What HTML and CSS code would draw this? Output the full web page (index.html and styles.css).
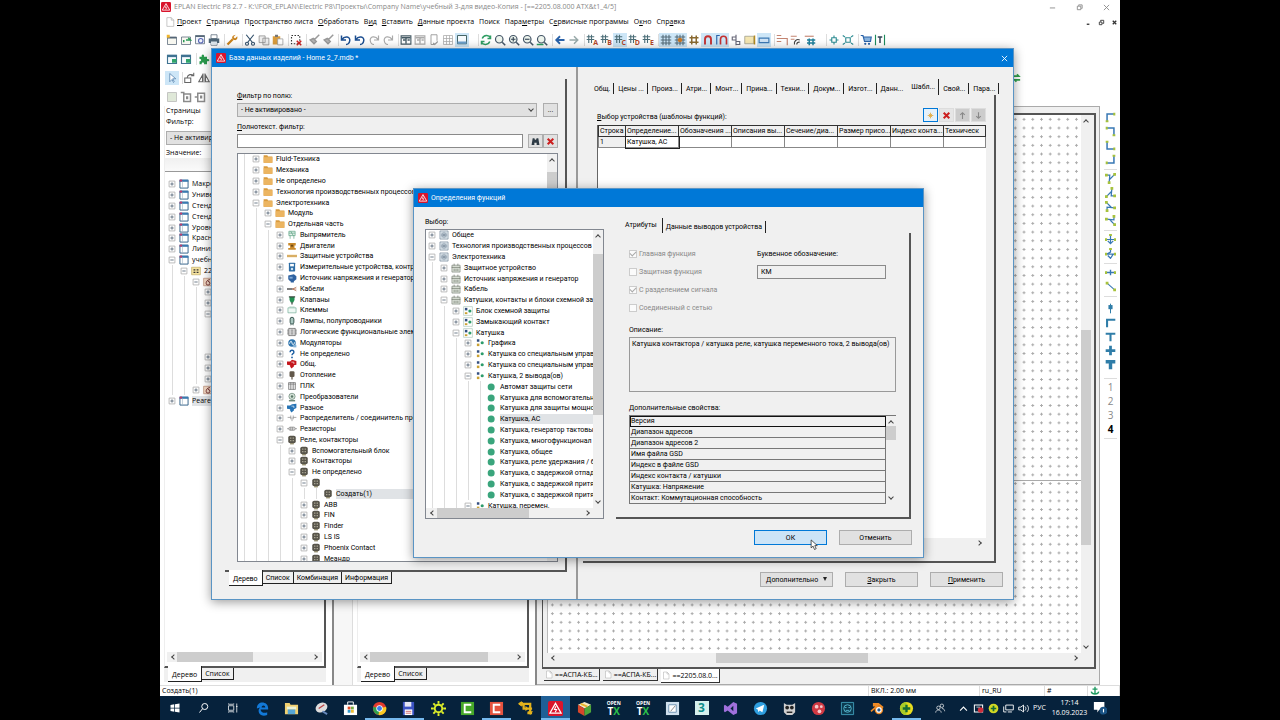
FILE: index.html
```html
<!DOCTYPE html>
<html lang="ru">
<head>
    <meta charset="UTF-8">
    <meta name="viewport" content="width=device-width, initial-scale=1.0">
    <title>EPLAN Electric P8 2.7</title>
    <link rel="stylesheet" href="styles.css">
</head>
<body>
    <!-- Shared icons -->
    <svg class="sprite" aria-hidden="true">
        <symbol id="plus" viewBox="0 0 12 12"><path d="M2.500 2.500h7v7h-7z" fill="#fff" stroke="#b0b0b0"/><path d="M4 6h4M6 4v4" stroke="#567"/></symbol>
        <symbol id="minus" viewBox="0 0 12 12"><path d="M2.500 2.500h7v7h-7z" fill="#fff" stroke="#b0b0b0"/><path d="M4 6h4" stroke="#567"/></symbol>
        <symbol id="eplan" viewBox="0 0 16 16"><rect width="16" height="16" rx="2" fill="#d9142c"/><path d="M8 2.500l6 10.500H2z" fill="none" stroke="#fff" stroke-width="1.300"/><path d="M8.500 5.500L6.800 9h2.400L7.700 12" fill="none" stroke="#fff" stroke-width="1.100"/></symbol>
        <symbol id="folder" viewBox="0 0 16 16"><path d="M1 2h6l1 2h7v10H1z" fill="#d99a3c"/><path d="M1 5h14v9H1z" fill="#ecb561"/></symbol>
        <symbol id="project" viewBox="0 0 16 16"><path d="M1.500 2h13v12.500h-13z" fill="#fff" stroke="#2f5f86" stroke-width="1.500"/><path d="M1 1h14v3.500H1z" fill="#3a7ab0"/><path d="M1 1h4v3H1z" fill="#c23b6b"/><path d="M5.500 4v10" stroke="#9fb4c4"/></symbol>
        <symbol id="plant" viewBox="0 0 16 16"><path d="M1 2h14v12H1z" fill="#f6e3a0" stroke="#b9a35a"/><path d="M4 5h3v2H4zM9 5h3v2H9zM4 9h3v2H4zM9 9h3v2H9z" fill="#333"/></symbol>
        <symbol id="place" viewBox="0 0 16 16"><path d="M1 2h14v12H1z" fill="#f3d8c4" stroke="#b07f66"/><path d="M11 4C6 5 5 8 5 10a3 3 0 1 0 3-3" fill="none" stroke="#733" stroke-width="1.500"/></symbol>
        <symbol id="relay" viewBox="0 0 16 16"><rect x="2" y="1" width="12" height="12" rx="3" fill="#57544a"/><path d="M5 4h2v2H5zM9 4h2v2H9zM5 8h2v2H5zM9 8h2v2H9z" fill="#b3af9c"/><path d="M5 13h6v2H5z" fill="#8b8463"/></symbol>
        <symbol id="rectifier" viewBox="0 0 16 16"><path d="M3 2h10v7H3zM5 9v5M11 9v5M3 5h10M6 2l4 7" fill="#e3f1ea" stroke="#4d9a78"/></symbol>
        <symbol id="motor" viewBox="0 0 16 16"><path d="M2 3h12v4h-2v4h2v3H2v-3h3V7H2z" fill="#c9892a"/><path d="M6 6h4v3H6z" fill="#6d4a14"/></symbol>
        <symbol id="fuse" viewBox="0 0 16 16"><path d="M0 6h16v4H0z" fill="#e8c27d"/><path d="M0 8h16" stroke="#b98530"/></symbol>
        <symbol id="meter" viewBox="0 0 16 16"><rect x="3" y="1" width="10" height="14" rx="1" fill="#2e6da5"/><path d="M5 3h6v4H5z" fill="#fff"/><circle cx="8" cy="11" r="2" fill="#cfe3f4"/></symbol>
        <symbol id="source" viewBox="0 0 16 16"><path d="M2 4l9-2 4 3v5l-4 3v2H6v-2H5l-3-3z" fill="#2f62a0"/><path d="M4 6h5v3H4z" fill="#7fa9d6"/></symbol>
        <symbol id="cable" viewBox="0 0 16 16"><path d="M0 8h9" stroke="#777" stroke-width="3"/><path d="M9 8l6-3M9 8h6M9 8l6 3" stroke="#a0522d"/></symbol>
        <symbol id="valve" viewBox="0 0 16 16"><path d="M4 3h8v5l-2 4H6L4 8z" fill="#239052"/><path d="M3 2h10v2H3zM7 11h2v4H7z" fill="#3b4a40"/></symbol>
        <symbol id="terminal" viewBox="0 0 16 16"><path d="M1.500 4.500h13v8h-13zM5 4V2M8 4V2M11 4V2" fill="#eef8f4" stroke="#6aa890"/></symbol>
        <symbol id="lamp" viewBox="0 0 16 16"><rect x="5" y="2" width="6" height="11" rx="3" fill="#a9c7c0" stroke="#31504a" stroke-width="1.500"/><path d="M6 13v2M10 13v2" stroke="#31504a"/></symbol>
        <symbol id="logic" viewBox="0 0 16 16"><rect x="3" y="2" width="10" height="12" fill="#ddd" stroke="#555"/><path d="M0 5h3M0 8h3M0 11h3M13 5h3M13 8h3M13 11h3M6 5h4M6 8h4M6 11h4" stroke="#555"/></symbol>
        <symbol id="modul" viewBox="0 0 16 16"><circle cx="8" cy="8" r="6" fill="#2e74ad"/><path d="M4 9c2-5 3-5 4-1s3 4 4-1" fill="none" stroke="#fff" stroke-width="1.500"/><path d="M10 11h5v4h-5z" fill="#86b4d8"/></symbol>
        <symbol id="unknown" viewBox="0 0 16 16"><path d="M5 5c0-4 6-4 6 0 0 3-3 2-3 5" fill="none" stroke="#1d5fa2" stroke-width="2.200"/><circle cx="8" cy="13.500" r="1.400" fill="#1d5fa2"/></symbol>
        <symbol id="common" viewBox="0 0 16 16"><path d="M0 4h5l3-3 7 2v6l-4 1v2l-4 3-2-3v-2L0 9z" fill="#c4161c"/><path d="M7 5h4v3" stroke="#fff" fill="none"/></symbol>
        <symbol id="misc" viewBox="0 0 16 16"><path d="M0 4h5l3-2 7-1v7l-4 2v2l-4 3-2-3v-2L0 9z" fill="#2774b5"/><path d="M7 5h4v3" stroke="#fff" fill="none"/></symbol>
        <symbol id="heat" viewBox="0 0 16 16"><rect x="4" y="2" width="8" height="9" rx="2" fill="#62584a"/><path d="M8 11v4" stroke="#62584a" stroke-width="2"/></symbol>
        <symbol id="plc" viewBox="0 0 16 16"><path d="M2.500 2.500h11v11h-11zM6 2v12M10 2v12M2 5h12" fill="#e6e6e6" stroke="#666"/></symbol>
        <symbol id="conv" viewBox="0 0 16 16"><circle cx="8" cy="7" r="5" fill="#d5e3d9" stroke="#5a7767"/><circle cx="8" cy="7" r="2" fill="#5a7767"/><path d="M3 14h10" stroke="#5a7767" stroke-width="2"/></symbol>
        <symbol id="distr" viewBox="0 0 16 16"><path d="M1 7h5M10 7h5M6 4v6M10 4v6M8 7v6" stroke="#777"/></symbol>
        <symbol id="resistor" viewBox="0 0 16 16"><rect x="3" y="5" width="10" height="5" rx="2" fill="#ddd" stroke="#777"/><path d="M0 7.500h3M13 7.500h3M6 5v5M9 5v5" stroke="#777"/></symbol>
        <symbol id="trade" viewBox="0 0 16 16"><path d="M1.500 1.500h13v13h-13z" fill="#e4ecf2" stroke="#6c7f8e"/><path d="M5 4v3M11 4v3M5 9v3M11 9v3M3 8h10M8 3v10" stroke="#3d556a"/></symbol>
        <symbol id="group" viewBox="0 0 16 16"><path d="M1.500 3.500h13v11h-13z" fill="#dfe5dc" stroke="#747a70"/><path d="M1 7h14M5 4V1M11 4V1M5 9v4M8 9v4M11 9v4" stroke="#5b6357"/></symbol>
        <symbol id="func" viewBox="0 0 16 16"><path d="M1 1h14v14H1z" fill="#fff" stroke="#a5c3b5"/><path d="M3 3h4v4H3z" fill="#334f80"/><path d="M3 10h4v3H3z" fill="#caa131"/><circle cx="11" cy="8" r="2.500" fill="#2c9c6b"/></symbol>
        <symbol id="defs" viewBox="0 0 16 16"><path d="M3 2h4v4H3z" fill="#334f80"/><path d="M3 9h4v4H3z" fill="#caa131"/><circle cx="11.500" cy="7.500" r="2.500" fill="#2c9c6b"/></symbol>
        <symbol id="dot" viewBox="0 0 12 12"><circle cx="5" cy="6" r="4.200" fill="#3aa57c"/></symbol>
        <symbol id="page" viewBox="0 0 16 16"><path d="M3 1h7l4 4v10H3z" fill="#fff" stroke="#a9a9a9"/><path d="M10 1v4h4" fill="none" stroke="#a9a9a9"/></symbol>
        <symbol id="sheetblue" viewBox="0 0 16 16"><path d="M2 3h12v11H2z" fill="#f5fafd" stroke="#3f7291" stroke-width="1.500"/><path d="M2 4h12" stroke="#3f7291" stroke-width="3"/><path d="M8 8h6v5H8z" fill="#2fa56a"/></symbol>
        <symbol id="window" viewBox="0 0 16 16"><path d="M1.500 2.500h13v11h-13z" fill="none" stroke="currentColor" stroke-width="1.500"/><path d="M2 5h12M8 5v8M4 8h3M10 8h3" stroke="currentColor" stroke-width="1.800"/></symbol>
        <symbol id="undo" viewBox="0 0 16 16"><path d="M2 2v6h6M2.500 7.500C6 2 14 3 13 9c-.5 3-3 5-5 5" fill="none" stroke="currentColor" stroke-width="2"/></symbol>
        <symbol id="redo" viewBox="0 0 16 16"><path d="M14 2v6H8M13.500 7.500C10 2 2 3 3 9c.5 3 3 5 5 5" fill="none" stroke="currentColor" stroke-width="1.600"/></symbol>
        <symbol id="brush" viewBox="0 0 16 16"><path d="M15 1L8 8M3 8l5 5 3-3-4-4z" stroke="#9a9a9a" stroke-width="2" fill="#b5b5b5"/></symbol>
        <symbol id="lens" viewBox="0 0 16 16"><circle cx="7" cy="7" r="5" fill="#eef5ee" stroke="#456" stroke-width="1.600"/><path d="M11 11l4 4" stroke="#456" stroke-width="2"/></symbol>
        <symbol id="hash" viewBox="0 0 16 16"><path d="M4 1v12M8 1v12M1 4h11M1 8h11" stroke="#4c6e78" stroke-width="1.600"/></symbol>
        <symbol id="grid" viewBox="0 0 16 16"><path d="M4 1v14M8 1v14M12 1v14M1 4h14M1 8h14M1 12h14" stroke="#546a78" stroke-width="1.400"/></symbol>
        <symbol id="corner" viewBox="0 0 16 16"><path d="M3 14V3h11" fill="none" stroke="#3878b4" stroke-width="2.200"/><path d="M12 1h3v4h-3zM1 12h4v3H1z" fill="#a7c23c"/></symbol>
        <symbol id="branch" viewBox="0 0 16 16"><path d="M2 3h5l-1 11M14 2L7 9" fill="none" stroke="#3878b4" stroke-width="1.800"/><path d="M0 1h4v4H0zM12 0h4v4h-4zM4 12h4v4H4z" fill="#a7c23c"/></symbol>
        <symbol id="binoc" viewBox="0 0 16 16"><path d="M3 2h3l1 3h2l1-3h3l2 12h-5v-4H6v4H1z" fill="#2e3b45"/></symbol>
        <symbol id="cross" viewBox="0 0 16 16"><path d="M3 3l10 10M13 3L3 13" stroke="#cc1f1f" stroke-width="3.500"/></symbol>
        <symbol id="chart" viewBox="0 0 16 16"><path d="M1 2h6M1 6h9M1 10h6M9 6h6v9" stroke="#c48572" stroke-width="1.500" fill="none"/></symbol>
    </svg>

    <div class="screen">
        <header class="titlebar">
            <svg class="icon"><use href="#eplan"/></svg>
            <span>EPLAN Electric P8 2.7 - K:\!FOR_EPLAN\Electric P8\Проекты\Company Name\учебный 3-для видео-Копия - [==2205.08.000 ATX&amp;t1_4/5]</span>
            <div class="window-buttons">
                <svg viewBox="0 0 8 8"><path d="M1 4.500h6" stroke="#888"/></svg>
                <svg viewBox="0 0 8 8"><path d="M1.500 2.500h4v4h-4zM3 2V1h4v4H6" fill="none" stroke="#888"/></svg>
                <svg viewBox="0 0 8 8"><path d="M1 1l6 6M7 1L1 7" stroke="#888"/></svg>
            </div>
        </header>

        <nav class="menubar">
            <svg class="icon"><use href="#page"/></svg>
            <a href="#"><u>П</u>роект</a>
            <a href="#"><u>С</u>траница</a>
            <a href="#">П<u>р</u>остранство листа</a>
            <a href="#"><u>О</u>бработать</a>
            <a href="#">В<u>и</u>д</a>
            <a href="#"><u>В</u>ставить</a>
            <a href="#"><u>Д</u>анные проекта</a>
            <a href="#">Поиск</a>
            <a href="#">Пара<u>м</u>етры</a>
            <a href="#">С<u>е</u>рвисные программы</a>
            <a href="#">О<u>к</u>но</a>
            <a href="#">Спр<u>а</u>вка</a>
            <div class="child-buttons">
                <svg viewBox="0 0 8 8"><path d="M2 6h3" stroke="#333" stroke-width="1.500"/></svg>
                <svg viewBox="0 0 8 8"><path d="M1.500 3.500h3v3h-3zM3 3V1.500h3.500V5H5" fill="none" stroke="#333"/></svg>
                <svg viewBox="0 0 8 8"><path d="M2 2l4 4M6 2L2 6" stroke="#333" stroke-width="1.500"/></svg>
            </div>
        </nav>

        <div class="toolbars">
            <div class="toolbar">
                <div class="tools">
                    <svg viewBox="0 0 16 16"><path d="M2 4h12v10H2z" fill="#f7f7f0" stroke="#567"/><path d="M2 5h12" stroke="#567" stroke-width="2"/><path d="M1 1h4v4H1z" fill="#f0b52c"/></svg>
                    <svg viewBox="0 0 16 16"><path d="M2 4h12v10H2z" fill="#f7f7f0" stroke="#567"/><path d="M8 8h6l-3-3M5 8v3" stroke="#2a9a55" stroke-width="2" fill="none"/></svg>
                    <svg viewBox="0 0 16 16"><path d="M2 2h12v11H2z" fill="#f0f3fa" stroke="#567"/><path d="M2 3h12" stroke="#567" stroke-width="2"/><circle cx="9" cy="9" r="3" fill="none" stroke="#5867b4" stroke-width="1.500"/></svg>
                    <svg viewBox="0 0 16 16"><path d="M4 1h8v5H4zM4 10h8v5H4z" fill="#fff" stroke="#567"/><path d="M1 6h14v6H1z" fill="#4d6475"/><path d="M4 10h8v4H4z" fill="#dfe8ee"/></svg>
                </div>
                <div class="tools">
                    <svg viewBox="0 0 16 16"><path d="M2 14l7-7" stroke="#c9821b" stroke-width="3"/><path d="M13 1l-3 3 2 2 3-3c1 3-1 6-4 5S7 4 10 2z" fill="#c9821b"/></svg>
                </div>
                <div class="tools">
                    <svg viewBox="0 0 16 16"><path d="M3 1l8 10M13 1L5 11" stroke="#33506b" stroke-width="1.600"/><circle cx="4" cy="13" r="2" fill="none" stroke="#33506b" stroke-width="1.500"/><circle cx="12" cy="13" r="2" fill="none" stroke="#33506b" stroke-width="1.500"/></svg>
                    <svg viewBox="0 0 16 16"><path d="M1.500 2.500h8v9h-8zM6.500 5.500h8v9h-8z" fill="#eee" stroke="#888"/></svg>
                    <svg viewBox="0 0 16 16"><path d="M1 3h10v11H1z" fill="#d99c3d"/><path d="M4 1h4v3H4z" fill="#777"/><path d="M7.500 6.500h7v8h-7z" fill="#fff" stroke="#999"/></svg>
                </div>
                <div class="tools">
                    <svg viewBox="0 0 16 16"><path d="M2 2h11v11H2z" fill="none" stroke="#333" stroke-width="1.500" stroke-dasharray="2 2"/><path d="M9 9l6 6M15 9l-6 6" stroke="#c22" stroke-width="2"/></svg>
                </div>
                <div class="tools">
                    <svg><use href="#brush"/></svg>
                    <svg><use href="#brush"/></svg>
                </div>
                <div class="tools">
                    <svg class="navy"><use href="#undo"/></svg>
                    <svg class="navy"><use href="#undo"/></svg>
                    <svg class="muted"><use href="#redo"/></svg>
                    <svg class="muted"><use href="#redo"/></svg>
                </div>
                <div class="tools">
                    <svg class="slate"><use href="#window"/></svg>
                    <svg class="muted"><use href="#window"/></svg>
                    <svg viewBox="0 0 16 16"><path d="M4 1h8v8M4 1v13h4" fill="none" stroke="#999" stroke-width="1.200"/><path d="M7 12l2 2 4-4" fill="none" stroke="#999" stroke-width="1.500"/></svg>
                    <svg viewBox="0 0 16 16"><path d="M2 2h12v12H2zM2 6h12M2 10h12M6 2v12M10 2v12" fill="none" stroke="#aaa"/></svg>
                    <svg class="on" viewBox="0 0 16 16"><path d="M2 2h12v11H2z" fill="#f5fafd" stroke="#355" stroke-width="1.200"/><path d="M2 10h12v3H2z" fill="#6ba0cc"/></svg>
                </div>
                <div class="tools far">
                    <svg viewBox="0 0 16 16"><path d="M3 6c2-5 9-5 11-1M14 2v4h-4M13 10c-2 5-9 5-11 1M2 14v-4h4" fill="none" stroke="#2f9d63" stroke-width="2"/></svg>
                    <svg><use href="#lens"/></svg>
                    <svg viewBox="0 0 16 16"><use href="#lens"/><path d="M4 7h6M7 4v6" stroke="#345" stroke-width="1.500"/></svg>
                    <svg viewBox="0 0 16 16"><use href="#lens"/><path d="M4 7h6" stroke="#345" stroke-width="1.500"/></svg>
                    <svg viewBox="0 0 16 16"><use href="#lens"/><path d="M1 14h9" stroke="#2f9d63" stroke-width="2"/></svg>
                </div>
                <div class="tools">
                    <svg viewBox="0 0 16 16"><path d="M14 8H4M8 3L3 8l5 5" fill="none" stroke="#2a62a8" stroke-width="2.400"/></svg>
                    <svg viewBox="0 0 16 16"><path d="M2 8h10M8 3l5 5-5 5" fill="none" stroke="#9aa" stroke-width="2"/></svg>
                </div>
                <div class="tools">
                    <span class="hash-tool"><svg><use href="#hash"/></svg><b>A</b></span>
                    <span class="hash-tool"><svg><use href="#hash"/></svg><b>B</b></span>
                    <span class="hash-tool on"><svg><use href="#hash"/></svg><b>C</b></span>
                    <span class="hash-tool"><svg><use href="#hash"/></svg><b>D</b></span>
                    <span class="hash-tool"><svg><use href="#hash"/></svg><b>E</b></span>
                </div>
                <div class="tools">
                    <svg class="on"><use href="#grid"/></svg>
                    <svg class="on" viewBox="0 0 16 16"><use href="#grid"/><circle cx="8" cy="8" r="3" fill="#c87828"/></svg>
                    <svg viewBox="0 0 16 16"><path d="M5 2v12M11 2v12M2 5h12M2 11h12" stroke="#8a6a30" stroke-width="2"/></svg>
                    <svg class="on" viewBox="0 0 16 16"><path d="M4 14V7a4 4 0 0 1 8 0v7" fill="none" stroke="#c43232" stroke-width="2.500"/></svg>
                    <svg class="on" viewBox="0 0 16 16"><path d="M1 14V2h4" fill="none" stroke="#2a62a8" stroke-width="1.500"/><path d="M6 14V7a4 4 0 0 1 8 0v7" fill="none" stroke="#c43232" stroke-width="2.200"/></svg>
                    <svg viewBox="0 0 16 16"><path d="M8 1v14M3 4h5v4H3zM8 10h5v4H8" fill="none" stroke="#667" stroke-width="1.500"/></svg>
                    <svg viewBox="0 0 16 16"><path d="M1 3h12v10H1z" fill="#f4e6b2" stroke="#998"/><path d="M14 2v12" stroke="#b58c1f" stroke-width="2"/></svg>
                    <svg class="on" viewBox="0 0 16 16"><path d="M1.500 5.500h13v6h-13z" fill="#cfe3f5" stroke="#3c79b4" stroke-width="1.500"/></svg>
                </div>
                <div class="tools">
                    <svg><use href="#chart"/></svg>
                    <svg viewBox="0 0 16 16"><path d="M1 3h8M1 7h5" stroke="#c48572" stroke-width="1.500"/><path d="M6 14a5 5 0 0 1 7-6M9 14a3 3 0 0 1 4-3" fill="none" stroke="#444" stroke-width="1.500"/></svg>
                    <svg viewBox="0 0 16 16"><path d="M1 3h12" stroke="#c48572" stroke-width="1.500"/><path d="M7 6v9M12 6v9M4 8h11M4 12h11" stroke="#22809c" stroke-width="2"/></svg>
                </div>
                <div class="tools far">
                    <svg viewBox="0 0 16 16"><path d="M5 5h6v6H5zM8 2v3M8 11v3M2 8h3M11 8h3" fill="none" stroke="#2f8d93" stroke-width="1.500"/></svg>
                    <svg viewBox="0 0 16 16"><path d="M5 5h6v6H5zM1 2l3 2M15 2l-3 2M1 14l3-2M15 14l-3-2" fill="none" stroke="#2f8d93" stroke-width="1.500"/></svg>
                </div>
                <div class="tools">
                    <svg viewBox="0 0 16 16"><path d="M1 2h3l2 8h8l1-6H5" fill="#8ab4de" stroke="#2a62a8" stroke-width="1.500"/><circle cx="7" cy="13" r="1.500" fill="#2a62a8"/><circle cx="12" cy="13" r="1.500" fill="#2a62a8"/></svg>
                    <svg viewBox="0 0 16 16"><path d="M2 1v14M14 1v14" stroke="#1d8a5b" stroke-width="1.500"/><path d="M5 4h6M8 4v8" stroke="#345" stroke-width="2"/></svg>
                </div>
            </div>
            <div class="toolbar">
                <div class="tools">
                    <svg><use href="#sheetblue"/></svg>
                    <svg><use href="#sheetblue"/></svg>
                </div>
                <div class="tools">
                    <svg viewBox="0 0 16 16"><path d="M2 5h3c-1-4 4-4 3 0h4v3c4-1 4 4 0 3v4H8c1-3-4-3-3 0H2v-4c3 0 3-3 0-3z" fill="#2a9a4d"/></svg>
                </div>
            </div>
            <div class="toolbar">
                <div class="tools">
                    <svg class="on" viewBox="0 0 16 16"><path d="M5 2v11l3-3 2 4 1-1-2-4h4z" fill="#fff" stroke="#4f7fae"/></svg>
                </div>
                <div class="tools">
                    <svg viewBox="0 0 16 16"><path d="M1 8h8v6H1zM4 8c1-5 6-6 9-3M13 1v4H9" fill="none" stroke="#666" stroke-width="1.400"/></svg>
                    <svg viewBox="0 0 16 16"><path d="M8 2v12M6 4L1 13h5zM10 4l5 9h-5z" fill="none" stroke="#666" stroke-width="1.400"/></svg>
                </div>
                <svg class="stray" viewBox="0 0 16 16"><path d="M2 5h9l-3-3M13 11H4l3 3" fill="none" stroke="#2fa04a" stroke-width="2.500"/></svg>
            </div>
            <div class="toolbar">
                <div class="tools">
                    <svg viewBox="0 0 16 16"><path d="M2 2h12v12H2z" fill="#dfe8d8" stroke="#b5b5b5"/></svg>
                    <svg viewBox="0 0 16 16"><path d="M1 2h5M5 4h9v10H5z" fill="none" stroke="#8a8a8a" stroke-width="2"/><path d="M8 7h3v4H8z" fill="#8a8a8a"/></svg>
                    <svg viewBox="0 0 16 16"><path d="M1 8h4M5 3h9v11H5z" fill="none" stroke="#8a8a8a" stroke-width="2"/><path d="M8 6h3v4H8z" fill="#8a8a8a"/></svg>
                </div>
            </div>
        </div>

        <main class="workspace">
            <section class="navigator">
                <div class="nav-body">
                    <h2>Страницы</h2>
                    <label for="page_filter">Фильтр:</label>
                    <select id="page_filter"><option>- Не активировано -</option></select>
                    <label for="page_value">Значение:</label>
                    <input type="text" id="page_value" class="flat">
                    <ul class="tree tree-pages">
                        <li><svg><use href="#plus"/></svg><svg><use href="#project"/></svg>Макросы</li>
                        <li><svg><use href="#plus"/></svg><svg><use href="#project"/></svg>Универ</li>
                        <li><svg><use href="#plus"/></svg><svg><use href="#project"/></svg>Стенд</li>
                        <li><svg><use href="#plus"/></svg><svg><use href="#project"/></svg>Стенд</li>
                        <li><svg><use href="#plus"/></svg><svg><use href="#project"/></svg>Уровн</li>
                        <li><svg><use href="#plus"/></svg><svg><use href="#project"/></svg>Красн</li>
                        <li><svg><use href="#plus"/></svg><svg><use href="#project"/></svg>Линия</li>
                        <li><svg><use href="#minus"/></svg><svg><use href="#project"/></svg>учебн</li>
                        <li class="l1"><svg><use href="#minus"/></svg><svg><use href="#plant"/></svg>2205</li>
                        <li class="l2"><svg><use href="#minus"/></svg><svg><use href="#place"/></svg></li>
                        <li class="l3"><svg><use href="#plus"/></svg></li>
                        <li class="l3"><svg><use href="#plus"/></svg></li>
                        <li class="l3"><svg><use href="#minus"/></svg></li>
                        <li class="l3"></li>
                        <li class="l3"></li>
                        <li class="l3"></li>
                        <li class="l3"><svg><use href="#plus"/></svg></li>
                        <li class="l3"><svg><use href="#plus"/></svg></li>
                        <li class="l3"><svg><use href="#plus"/></svg></li>
                        <li class="l2"><svg><use href="#plus"/></svg><svg><use href="#place"/></svg></li>
                        <li><svg><use href="#plus"/></svg><svg><use href="#project"/></svg><span class="picked">Реаген</span></li>
                    </ul>
                    <div class="hscroll"><i class="arrow left"></i><i class="thumb half"></i><i class="arrow right"></i></div>
                </div>
                <div class="bottom-tabs">
                    <button class="active">Дерево</button>
                    <button>Список</button>
                </div>
            </section>

            <div class="gutter"></div>

            <section class="navigator second">
                <div class="nav-body">
                    <div class="hscroll"><i class="arrow left"></i><i class="thumb most"></i><i class="arrow right"></i></div>
                </div>
                <div class="bottom-tabs">
                    <button class="active">Дерево</button>
                    <button>Список</button>
                </div>
            </section>

            <section class="editor">
                <div class="editor-body">
                    <div class="sheet"></div>
                    <div class="vscroll"><i class="arrow up"></i><i class="thumb"></i><i class="arrow down"></i></div>
                    <div class="hscroll"><i class="arrow left"></i><i class="thumb"></i><i class="arrow right"></i></div>
                </div>
                <div class="doc-tabs">
                    <button><svg><use href="#page"/></svg>==АСПА-КБ...</button>
                    <button><svg><use href="#page"/></svg>==АСПА-КБ...</button>
                    <button class="active"><svg><use href="#page"/></svg>==2205.08.0...</button>
                </div>
            </section>

            <aside class="symbols">
                <div>
                    <svg><use href="#corner"/></svg>
                    <svg class="r90"><use href="#corner"/></svg>
                    <svg class="r270"><use href="#corner"/></svg>
                    <svg class="r180"><use href="#corner"/></svg>
                </div>
                <div>
                    <svg><use href="#branch"/></svg>
                    <svg class="r180"><use href="#branch"/></svg>
                    <svg class="r270"><use href="#branch"/></svg>
                    <svg class="r90"><use href="#branch"/></svg>
                </div>
                <div>
                    <svg viewBox="0 0 16 16"><path d="M8 1v13M1 8h14M4 10l4 4 4-4" fill="none" stroke="#3878b4" stroke-width="1.800"/><path d="M6 0h4v3H6zM0 6h3v4H0zM13 6h3v4h-3z" fill="#a7c23c"/></svg>
                    <svg viewBox="0 0 16 16"><path d="M8 1v5L2 9h12M4 11l4 4 4-6" fill="none" stroke="#3878b4" stroke-width="1.800"/><path d="M6 0h4v3H6zM0 7h3v4H0zM13 7h3v4h-3z" fill="#a7c23c"/></svg>
                </div>
                <div>
                    <svg viewBox="0 0 16 16"><path d="M1 8h14M8 4v8" stroke="#3878b4" stroke-width="2"/><path d="M0 6h3v4H0zM13 6h3v4h-3z" fill="#a7c23c"/></svg>
                    <svg viewBox="0 0 16 16"><path d="M3 3l11 10" stroke="#3878b4" stroke-width="1.500"/><path d="M1 1h4v4H1zM12 11h4v4h-4z" fill="#a7c23c"/></svg>
                </div>
                <div>
                    <svg viewBox="0 0 16 16"><path d="M8 1v14" stroke="#2f7da8" stroke-width="1.500"/><path d="M5 3h6v6H5z" fill="#2f7da8"/></svg>
                    <svg viewBox="0 0 16 16"><path d="M3 15V4h12" fill="none" stroke="#2f7da8" stroke-width="3"/></svg>
                    <svg viewBox="0 0 16 16"><path d="M1 4h14M8 4v11" stroke="#2f7da8" stroke-width="3"/></svg>
                    <svg viewBox="0 0 16 16"><path d="M1 8h14M8 1v14" stroke="#2f7da8" stroke-width="4"/></svg>
                    <svg viewBox="0 0 16 16"><path d="M1 4h14M8 4v11" stroke="#2f7da8" stroke-width="5"/></svg>
                </div>
                <ol>
                    <li>1</li>
                    <li>2</li>
                    <li>3</li>
                    <li class="current">4</li>
                </ol>
            </aside>
        </main>

        <footer class="statusbar">
            <span>Создать(1)</span>
            <span class="snap">ВКЛ.: 2.00 мм</span>
            <span class="locale">ru_RU</span>
            <span class="mark">#</span>
            <span class="anchor"><svg class="icon" viewBox="0 0 16 16"><path d="M8 1v13M4 5h8M2 9c1 5 11 5 12 0" fill="none" stroke="#1f9a62" stroke-width="2.200"/></svg></span>
        </footer>

        <footer class="taskbar">
            <div class="start">
                <svg viewBox="0 0 16 16"><path d="M2 4l5-1v4.500H2zM8 3l6-1v5.500H8zM2 8.500h5V13l-5-1zM8 8.500h6V14l-6-1z" fill="#fff"/></svg>
                <svg viewBox="0 0 16 16"><circle cx="9" cy="6" r="4" fill="none" stroke="#fff" stroke-width="1.300"/><path d="M6 9l-4 5" stroke="#fff" stroke-width="1.300"/></svg>
                <svg viewBox="0 0 16 16"><path d="M2 5h7v6H2zM2 2v1h7V2M2 14v-1h7v1M13 2v12M12 6h2" fill="none" stroke="#fff"/></svg>
            </div>
            <div class="apps">
                <span><svg viewBox="0 0 16 16"><path d="M2 8c0-9 13-8 12 1H6c0 4 5 4 7 3v3C7 17 3 14 4 9c1-2 2-3 4-3" fill="#1279d8"/><path d="M7 7h4c0-3-4-3-4 0z" fill="#06223f"/></svg></span>
                <span><svg viewBox="0 0 16 16"><path d="M1 2h5l1 2h8v10H1z" fill="#f0d070"/><path d="M3 6h10v3H3z" fill="#e8f2d8"/><path d="M4 9h8v5H4z" fill="#56a5d4"/></svg></span>
                <span><svg viewBox="0 0 16 16"><ellipse cx="8" cy="7" rx="6.500" ry="5" fill="#ddd" transform="rotate(-25 8 7)"/><path d="M5 8l6-4" stroke="#b44" stroke-width="1.500"/><path d="M9 11l5 3" stroke="#68b" stroke-width="2"/></svg></span>
                <span><svg viewBox="0 0 16 16"><path d="M5 4V1h6v3" fill="none" stroke="#fff"/><path d="M1 4h14v11H1z" fill="#fff"/><path d="M5 6h3v3H5z" fill="#e34c26"/><path d="M8.500 6h3v3h-3z" fill="#7a4"/><path d="M5 9.500h3v3H5z" fill="#39c"/><path d="M8.500 9.500h3v3h-3z" fill="#eb3"/></svg></span>
                <span class="open"><svg viewBox="0 0 16 16"><circle cx="8" cy="8" r="7" fill="#e33b2e"/><path d="M8 8L1.500 6A7 7 0 0 0 7 15z" fill="#2fa24f"/><path d="M8 8l7-2a7 7 0 0 1-8 9z" fill="#f9c923"/><circle cx="8" cy="8" r="3.400" fill="#fff"/><circle cx="8" cy="8" r="2.600" fill="#3b7ded"/></svg></span>
                <span class="open"><svg viewBox="0 0 16 16"><path d="M2 1h12v14H2z" fill="#3b53c4"/><path d="M4 1h7v5H4z" fill="#e4e6f4"/><path d="M4 9h8v6H4z" fill="#fff"/><path d="M5 11h6M5 13h6" stroke="#c66"/></svg></span>
                <span><svg viewBox="0 0 16 16"><circle cx="8" cy="8" r="4" fill="none" stroke="#dff02a" stroke-width="2"/><path d="M8 0v3M8 13v3M0 8h3M13 8h3M2.500 2.500l2 2M11.500 11.500l2 2M13.500 2.500l-2 2M4.500 11.500l-2 2" stroke="#dff02a" stroke-width="2"/></svg></span>
                <span><svg viewBox="0 0 16 16"><path d="M1 1h14v14H1z" fill="#46a829"/><path d="M11 5V4H5v8h6v-1" fill="none" stroke="#fff" stroke-width="2"/></svg></span>
                <span class="open"><svg viewBox="0 0 16 16"><path d="M1 1h14v14H1z" fill="#e5533f"/><path d="M11 5V4H5v8h6v-1" fill="none" stroke="#fff" stroke-width="2"/></svg></span>
                <span><svg viewBox="0 0 16 16"><path d="M1 3h12v9M6 3v5h6M4 1v4M10 13h5M13 8h2" fill="none" stroke="#e3b21c" stroke-width="2.400"/><path d="M4 0v6L0 3zM8 5l3 3-3 3zM10 11l3 4 3-4z" fill="#e3b21c"/></svg></span>
                <span class="focused"><svg><use href="#eplan"/></svg></span>
                <span><svg viewBox="0 0 16 16"><path d="M8 1l7 3-7 4-7-4z" fill="#f4e9c4"/><path d="M1 4l7 4v8l-7-4z" fill="#d8472b"/><path d="M15 4L8 8v8l7-4z" fill="#4ea63a"/><path d="M4 3l7 3" stroke="#e7b42a" stroke-width="2"/></svg></span>
                <span class="opentx"><small>OPEN</small>T<em>X</em></span>
                <span class="opentx"><small>OPEN</small>T<em>X</em></span>
                <span><svg viewBox="0 0 16 16"><path d="M1 1h14v14H1z" fill="#cfe0ee"/><path d="M4 4h8v8H4z" fill="#fff" stroke="#6d93b4"/><path d="M6 11l5-6" stroke="#888"/></svg></span>
                <span class="max"><b>3</b></span>
                <span><svg viewBox="0 0 16 16"><path d="M11 1l4 2v10l-4 2-6-5-3 2-1-1V5l1-1 3 2zM11 5L8 8l3 3z" fill="#a070dc" fill-rule="evenodd"/></svg></span>
                <span><svg viewBox="0 0 16 16"><circle cx="8" cy="8" r="7" fill="#2f9fe0"/><path d="M3 8l9-4-2 8-3-2-1 2-1-3z" fill="#fff"/></svg></span>
                <span><svg viewBox="0 0 16 16"><path d="M2 2l3 2h6l3-2v10l-3 3H5l-3-3z" fill="#cfcfcf"/><circle cx="5.500" cy="7" r="2" fill="#222"/><circle cx="10.500" cy="7" r="2" fill="#222"/><path d="M5 12h6" stroke="#222" stroke-width="1.500"/></svg></span>
                <span><svg viewBox="0 0 16 16"><circle cx="8" cy="8" r="7" fill="#cf3943"/><circle cx="6" cy="6" r="2" fill="#f4c9cc"/><circle cx="11" cy="6" r="1.500" fill="#f4c9cc"/><circle cx="9" cy="11" r="2" fill="#f4c9cc"/></svg></span>
                <span><svg viewBox="0 0 16 16"><path d="M1.500 1.500h13v13h-13z" fill="#0c3a50" stroke="#3e9ab5"/><circle cx="8" cy="8" r="4" fill="none" stroke="#56b6cf"/><path d="M5 7h2M9 7h2M6 10h4" stroke="#56b6cf"/></svg></span>
                <span><svg viewBox="0 0 16 16"><path d="M1 11l7-6H4V3h5l5 4" fill="none" stroke="#ee8a25" stroke-width="1.800"/><circle cx="9.500" cy="9.500" r="4.500" fill="#ee8a25"/><circle cx="9.500" cy="9.500" r="3" fill="#fff"/><circle cx="9.500" cy="9.500" r="1.700" fill="#245b94"/></svg></span>
                <span class="open"><svg viewBox="0 0 16 16"><circle cx="8" cy="8" r="7" fill="#e7dc1f"/><path d="M8 1a7 7 0 0 0 0 14z" fill="#a9cb27"/><path d="M4 8h8M8 4v8" stroke="#176b33" stroke-width="2.500"/></svg></span>
            </div>
            <div class="tray">
                <svg viewBox="0 0 16 16"><circle cx="10" cy="4" r="2.500" fill="none" stroke="#fff"/><circle cx="5" cy="7" r="2.500" fill="none" stroke="#fff"/><path d="M1 14c0-5 8-5 8 0M10 8c3 0 4 2 4 4" fill="none" stroke="#fff"/></svg>
                <svg viewBox="0 0 16 16"><path d="M3 11l5-5 5 5" fill="none" stroke="#fff" stroke-width="1.600"/></svg>
                <svg viewBox="0 0 16 16"><path d="M2 3h12v10H2z" fill="none" stroke="#fff" stroke-width="1.500"/><circle cx="11" cy="10" r="4" fill="#cf2d3a"/><path d="M5 6h5" stroke="#fff"/></svg>
                <svg viewBox="0 0 16 16"><circle cx="8" cy="8" r="7" fill="#d3d824"/><path d="M4 8h8M8 4v8" stroke="#176b33" stroke-width="2.500"/></svg>
                <svg viewBox="0 0 16 16"><path d="M4 3h11v7H4zM7 13h6M1 5v8h4" fill="none" stroke="#fff" stroke-width="1.300"/></svg>
                <svg viewBox="0 0 16 16"><path d="M1 6h3l4-3v10L4 10H1zM10 5c2 2 2 4 0 6M13 3c3 3 3 7 0 10" fill="none" stroke="#fff" stroke-width="1.300"/></svg>
                <span>РУС</span>
                <time>17:14<br>16.09.2023</time>
                <svg class="notice" viewBox="0 0 16 16"><path d="M1 1h12v9H7l-2 3v-3H1z" fill="#fff"/><circle cx="12" cy="11" r="4.500" fill="#1a5486"/><path d="M12 9v4" stroke="#fff" stroke-width="1.300"/></svg>
            </div>
        </footer>

        <!-- Parts database window -->
        <section class="dialog parts">
            <header class="dialog-title">
                <svg class="icon"><use href="#eplan"/></svg>
                <h1>База данных изделий - Home 2_7.mdb *</h1>
                <button class="close" aria-label="Закрыть окно"><svg viewBox="0 0 8 8"><path d="M1 1l6 6M7 1L1 7" stroke="#fff"/></svg></button>
            </header>
            <div class="parts-body">
                <div class="parts-left">
                    <div class="tab-panel">
                        <label for="field_filter"><u>Ф</u>ильтр по полю:</label>
                        <div class="field-row">
                            <select id="field_filter"><option>- Не активировано -</option></select>
                            <i class="arrow down"></i>
                            <button class="more">...</button>
                        </div>
                        <label for="text_filter"><u>П</u>олнотекст. фильтр:</label>
                        <div class="field-row search-row">
                            <input type="text" id="text_filter">
                            <button aria-label="Найти"><svg><use href="#binoc"/></svg></button>
                            <button aria-label="Сбросить"><svg><use href="#cross"/></svg></button>
                        </div>
                        <div class="tree-box">
                            <ul class="tree tree-parts">
                                <li class="l1"><svg><use href="#plus"/></svg><svg><use href="#folder"/></svg>Fluid-Техника</li>
                                <li class="l1"><svg><use href="#plus"/></svg><svg><use href="#folder"/></svg>Механика</li>
                                <li class="l1"><svg><use href="#plus"/></svg><svg><use href="#folder"/></svg>Не определено</li>
                                <li class="l1"><svg><use href="#plus"/></svg><svg><use href="#folder"/></svg>Технология производственных процессов</li>
                                <li class="l1"><svg><use href="#minus"/></svg><svg><use href="#folder"/></svg>Электротехника</li>
                                <li class="l2"><svg><use href="#plus"/></svg><svg><use href="#folder"/></svg>Модуль</li>
                                <li class="l2"><svg><use href="#minus"/></svg><svg><use href="#folder"/></svg>Отдельная часть</li>
                                <li class="l3"><svg><use href="#plus"/></svg><svg><use href="#rectifier"/></svg>Выпрямитель</li>
                                <li class="l3"><svg><use href="#plus"/></svg><svg><use href="#motor"/></svg>Двигатели</li>
                                <li class="l3"><svg><use href="#plus"/></svg><svg><use href="#fuse"/></svg>Защитные устройства</li>
                                <li class="l3"><svg><use href="#plus"/></svg><svg><use href="#meter"/></svg>Измерительные устройства, контр</li>
                                <li class="l3"><svg><use href="#plus"/></svg><svg><use href="#source"/></svg>Источник напряжения и генератор</li>
                                <li class="l3"><svg><use href="#plus"/></svg><svg><use href="#cable"/></svg>Кабели</li>
                                <li class="l3"><svg><use href="#plus"/></svg><svg><use href="#valve"/></svg>Клапаны</li>
                                <li class="l3"><svg><use href="#plus"/></svg><svg><use href="#terminal"/></svg>Клеммы</li>
                                <li class="l3"><svg><use href="#plus"/></svg><svg><use href="#lamp"/></svg>Лампы, полупроводники</li>
                                <li class="l3"><svg><use href="#plus"/></svg><svg><use href="#logic"/></svg>Логические функциональные элементы</li>
                                <li class="l3"><svg><use href="#plus"/></svg><svg><use href="#modul"/></svg>Модуляторы</li>
                                <li class="l3"><svg><use href="#plus"/></svg><svg><use href="#unknown"/></svg>Не определено</li>
                                <li class="l3"><svg><use href="#plus"/></svg><svg><use href="#common"/></svg>Общ.</li>
                                <li class="l3"><svg><use href="#plus"/></svg><svg><use href="#heat"/></svg>Отопление</li>
                                <li class="l3"><svg><use href="#plus"/></svg><svg><use href="#plc"/></svg>ПЛК</li>
                                <li class="l3"><svg><use href="#plus"/></svg><svg><use href="#conv"/></svg>Преобразователи</li>
                                <li class="l3"><svg><use href="#plus"/></svg><svg><use href="#misc"/></svg>Разное</li>
                                <li class="l3"><svg><use href="#plus"/></svg><svg><use href="#distr"/></svg>Распределитель / соединитель про</li>
                                <li class="l3"><svg><use href="#plus"/></svg><svg><use href="#resistor"/></svg>Резисторы</li>
                                <li class="l3"><svg><use href="#minus"/></svg><svg><use href="#relay"/></svg>Реле, контакторы</li>
                                <li class="l4"><svg><use href="#plus"/></svg><svg><use href="#relay"/></svg>Вспомогательный блок</li>
                                <li class="l4"><svg><use href="#plus"/></svg><svg><use href="#relay"/></svg>Контакторы</li>
                                <li class="l4"><svg><use href="#minus"/></svg><svg><use href="#relay"/></svg>Не определено</li>
                                <li class="l5"><svg><use href="#minus"/></svg><svg><use href="#relay"/></svg></li>
                                <li class="l6 leaf"><svg><use href="#relay"/></svg><span class="picked">Создать(1)</span></li>
                                <li class="l5"><svg><use href="#plus"/></svg><svg><use href="#relay"/></svg>ABB</li>
                                <li class="l5"><svg><use href="#plus"/></svg><svg><use href="#relay"/></svg>FIN</li>
                                <li class="l5"><svg><use href="#plus"/></svg><svg><use href="#relay"/></svg>Finder</li>
                                <li class="l5"><svg><use href="#plus"/></svg><svg><use href="#relay"/></svg>LS IS</li>
                                <li class="l5"><svg><use href="#plus"/></svg><svg><use href="#relay"/></svg>Phoenix Contact</li>
                                <li class="l5"><svg><use href="#plus"/></svg><svg><use href="#relay"/></svg>Меандр</li>
                            </ul>
                            <div class="vscroll"><i class="arrow up"></i><i class="thumb"></i><i class="arrow down"></i></div>
                        </div>
                    </div>
                    <div class="bottom-tabs">
                        <button class="active">Дерево</button>
                        <button>Список</button>
                        <button>Комбинация</button>
                        <button>Информация</button>
                    </div>
                </div>

                <div class="parts-right">
                    <div class="top-tabs">
                        <button>Общ.</button>
                        <button>Цены ...</button>
                        <button>Произ...</button>
                        <button>Атри...</button>
                        <button>Монт...</button>
                        <button>Прина...</button>
                        <button>Техни...</button>
                        <button>Докум...</button>
                        <button>Изгот...</button>
                        <button class="before">Данн...</button>
                        <button class="active">Шабл...</button>
                        <button>Свой...</button>
                        <button>Пара...</button>
                    </div>
                    <div class="tab-panel">
                        <div class="device-head">
                            <span><u>В</u>ыбор устройства (шаблоны функций):</span>
                            <button class="hot" aria-label="Создать"><svg viewBox="0 0 16 16"><path d="M8 3v10M3 8h10M5 5l6 6M11 5l-6 6" stroke="#e3a93c" stroke-width="1.500"/></svg></button>
                            <button aria-label="Удалить"><svg><use href="#cross"/></svg></button>
                            <button class="dim" aria-label="Вверх"><svg viewBox="0 0 16 16"><path d="M8 14V3M4 7l4-4 4 4" fill="none" stroke="#888" stroke-width="2"/></svg></button>
                            <button class="dim" aria-label="Вниз"><svg viewBox="0 0 16 16"><path d="M8 2v11M4 9l4 4 4-4" fill="none" stroke="#888" stroke-width="2"/></svg></button>
                        </div>
                        <div class="device-grid">
                            <table>
                                <colgroup><col class="col-num"><col><col><col><col><col><col><col class="col-last"></colgroup>
                                <thead>
                                    <tr><th>Строка</th><th>Определение...</th><th>Обозначения ...</th><th>Описания вы...</th><th>Сечение/диа...</th><th>Размер присо...</th><th>Индекс конта...</th><th>Техническ</th></tr>
                                </thead>
                                <tbody>
                                    <tr><td class="num">1</td><td class="cell-active">Катушка, АС</td><td></td><td></td><td></td><td></td><td></td><td></td></tr>
                                </tbody>
                            </table>
                        </div>
                        <div class="hscroll"><i class="arrow left"></i><i class="arrow right"></i></div>
                    </div>
                    <div class="actions">
                        <button><u>Д</u>ополнительно <i class="caret"></i></button>
                        <button><u>З</u>акрыть</button>
                        <button><u>П</u>рименить</button>
                    </div>
                </div>
            </div>
        </section>

        <!-- Function definitions window -->
        <section class="dialog functions">
            <header class="dialog-title">
                <svg class="icon"><use href="#eplan"/></svg>
                <h1>Определения функций</h1>
            </header>
            <div class="functions-body">
                <div class="picker">
                    <span class="caption">Выбор:</span>
                    <div class="tree-box">
                        <ul class="tree tree-functions">
                            <li><svg><use href="#plus"/></svg><svg><use href="#trade"/></svg>Общее</li>
                            <li><svg><use href="#plus"/></svg><svg><use href="#trade"/></svg>Технология производственных процессов</li>
                            <li><svg><use href="#minus"/></svg><svg><use href="#trade"/></svg>Электротехника</li>
                            <li class="l1"><svg><use href="#plus"/></svg><svg><use href="#group"/></svg>Защитное устройство</li>
                            <li class="l1"><svg><use href="#plus"/></svg><svg><use href="#group"/></svg>Источник напряжения и генератор</li>
                            <li class="l1"><svg><use href="#plus"/></svg><svg><use href="#group"/></svg>Кабель</li>
                            <li class="l1"><svg><use href="#minus"/></svg><svg><use href="#group"/></svg>Катушки, контакты и блоки схемной за</li>
                            <li class="l2"><svg><use href="#plus"/></svg><svg><use href="#func"/></svg>Блок схемной защиты</li>
                            <li class="l2"><svg><use href="#plus"/></svg><svg><use href="#func"/></svg>Замыкающий контакт</li>
                            <li class="l2"><svg><use href="#minus"/></svg><svg><use href="#func"/></svg>Катушка</li>
                            <li class="l3"><svg><use href="#plus"/></svg><svg><use href="#defs"/></svg>Графика</li>
                            <li class="l3"><svg><use href="#plus"/></svg><svg><use href="#defs"/></svg>Катушка со специальным управ</li>
                            <li class="l3"><svg><use href="#plus"/></svg><svg><use href="#defs"/></svg>Катушка со специальным управ</li>
                            <li class="l3"><svg><use href="#minus"/></svg><svg><use href="#defs"/></svg>Катушка, 2 вывода(ов)</li>
                            <li class="l5 leaf"><svg><use href="#dot"/></svg>Автомат защиты сети</li>
                            <li class="l5 leaf"><svg><use href="#dot"/></svg>Катушка для вспомогательн</li>
                            <li class="l5 leaf"><svg><use href="#dot"/></svg>Катушка для защиты мощно</li>
                            <li class="l5 leaf"><svg><use href="#dot"/></svg><span class="picked">Катушка, АС</span></li>
                            <li class="l5 leaf"><svg><use href="#dot"/></svg>Катушка, генератор тактовы</li>
                            <li class="l5 leaf"><svg><use href="#dot"/></svg>Катушка, многофункционал</li>
                            <li class="l5 leaf"><svg><use href="#dot"/></svg>Катушка, общее</li>
                            <li class="l5 leaf"><svg><use href="#dot"/></svg>Катушка, реле удержания / б</li>
                            <li class="l5 leaf"><svg><use href="#dot"/></svg>Катушка, с задержкой отпад</li>
                            <li class="l5 leaf"><svg><use href="#dot"/></svg>Катушка, с задержкой притя</li>
                            <li class="l5 leaf"><svg><use href="#dot"/></svg>Катушка, с задержкой притя</li>
                            <li class="l3"><svg><use href="#minus"/></svg><svg><use href="#defs"/></svg>Катушка, перемен.</li>
                        </ul>
                        <div class="vscroll"><i class="arrow up"></i><i class="thumb"></i><i class="arrow down"></i></div>
                        <div class="hscroll"><i class="arrow left"></i><i class="thumb"></i><i class="arrow right"></i></div>
                    </div>
                </div>

                <div class="details">
                    <div class="top-tabs">
                        <button class="active">Атрибуты</button>
                        <button>Данные выводов устройства</button>
                    </div>
                    <div class="tab-panel">
                        <div class="attributes">
                            <div class="checks">
                                <label><input type="checkbox" checked disabled>Главная функция</label>
                                <label><input type="checkbox" disabled>Защитная функция</label>
                                <label><input type="checkbox" checked disabled>С разделением сигнала</label>
                                <label><input type="checkbox" disabled>Соединенный с сетью</label>
                            </div>
                            <div class="letter">
                                <label for="letter_code">Буквенное обозначение:</label>
                                <input type="text" id="letter_code" value="КМ" readonly>
                            </div>
                        </div>
                        <label for="description">Описание:</label>
                        <textarea id="description" readonly>Катушка контактора / катушка реле, катушка переменного тока, 2 вывода(ов)</textarea>
                        <span class="caption">Дополнительные свойства:</span>
                        <div class="properties">
                            <ul>
                                <li class="current">Версия</li>
                                <li>Диапазон адресов</li>
                                <li>Диапазон адресов 2</li>
                                <li>Имя файла GSD</li>
                                <li>Индекс в файле GSD</li>
                                <li>Индекс контакта / катушки</li>
                                <li>Катушка: Напряжение</li>
                                <li>Контакт: Коммутационная способность</li>
                            </ul>
                            <div class="vscroll"><i class="arrow up"></i><i class="thumb"></i><i class="arrow down"></i></div>
                        </div>
                    </div>
                </div>
            </div>
            <div class="actions">
                <button class="default">ОК</button>
                <button>Отменить</button>
            </div>
            <svg class="cursor" viewBox="0 0 16 20"><path d="M2 1v14l3.500-3 2.500 6 3-1.500-2.500-5.500H13z" fill="#fff" stroke="#222" stroke-width="1.300"/></svg>
        </section>
    </div>
</body>
</html>
```
FILE: styles.css
```css
* {
    box-sizing: border-box;
}
body {
    margin: 0;
    background-color: #000;
    font-family: 'Open Sans', 'Noto Sans', sans-serif;
    font-size: 7px;
    line-height: 10px;
    color: #000;
}
button, input, select, textarea {
    font: inherit;
    color: inherit;
    margin: 0;
    border-radius: 0;
}
h1, h2 {
    margin: 0;
    font-size: 7px;
    font-weight: normal;
}
ul, ol {
    margin: 0;
    padding: 0;
    list-style: none;
}
svg {
    display: block;
    flex: none;
}
.sprite {
    position: absolute;
    width: 0;
    height: 0;
}
.icon {
    width: 10px;
    height: 10px;
}
.screen {
    position: relative;
    display: flex;
    flex-direction: column;
    width: 75%;
    height: 100vh;
    margin: 0 auto;
    background-color: #fff;
    overflow: hidden;
}

/* Title and menu */
.titlebar {
    display: flex;
    align-items: center;
    gap: 3px;
    height: 14px;
    padding: 0 10px 0 1px;
    color: #888;
    white-space: nowrap;
}
.window-buttons {
    display: flex;
    gap: 20px;
    margin-left: auto;
}
.window-buttons svg, .child-buttons svg {
    width: 7px;
    height: 7px;
}
.menubar {
    display: flex;
    align-items: center;
    gap: 5px;
    height: 16px;
    padding: 0 2px 0 5px;
}
.menubar .icon {
    margin-right: -3px;
}
.menubar a {
    color: #000;
    text-decoration: none;
    white-space: nowrap;
}
.child-buttons {
    display: flex;
    gap: 6px;
    margin-left: auto;
}

/* Toolbars */
.toolbar {
    position: relative;
    display: flex;
    align-items: center;
    height: 19px;
    padding-left: 5px;
}
.tools {
    display: flex;
    margin-right: 4px;
}
.tools + .tools {
    box-shadow: -2px 0 0 -1px #ddd;
}
.tools.far {
    margin-left: 6px;
}
.tools > svg, .hash-tool {
    width: 14px;
    height: 14px;
    padding: 1px;
}
.tools .on {
    background-color: #cde6f7;
}
.navy {
    color: #1d4f91;
}
.muted {
    color: #aaa;
}
.slate {
    color: #455a64;
}
.hash-tool {
    position: relative;
}
.hash-tool svg {
    width: 11px;
    height: 11px;
}
.hash-tool b {
    position: absolute;
    right: 1px;
    bottom: 0;
    font-size: 7px;
    line-height: 8px;
    color: #b5482a;
}
.stray {
    position: absolute;
    right: 98px;
    width: 10px;
    height: 10px;
}

/* Scrollbars */
.vscroll, .hscroll {
    position: relative;
    display: flex;
    justify-content: space-between;
    align-items: center;
    background-color: #f0f0f0;
}
.vscroll {
    flex-direction: column;
    width: 10px;
    padding: 5px 0;
}
.hscroll {
    height: 10px;
    padding: 0 5px;
}
.arrow {
    width: 4px;
    height: 4px;
    border: solid #444;
    border-width: 1px 1px 0 0;
}
.arrow.up {
    transform: rotate(-45deg);
}
.arrow.down {
    transform: rotate(135deg);
}
.arrow.left {
    transform: rotate(-135deg);
}
.arrow.right {
    transform: rotate(45deg);
}
.thumb {
    position: absolute;
    background-color: #cdcdcd;
}
.vscroll .thumb {
    left: 0;
    right: 0;
}
.hscroll .thumb {
    top: 0;
    bottom: 0;
}

/* Docked navigators */
.workspace {
    display: flex;
    flex: 1;
    min-height: 0;
    overflow: hidden;
}
.navigator {
    display: flex;
    flex-direction: column;
    width: 174px;
    padding: 0 6px 3px 4px;
    border-right: 2px solid #888;
}
.nav-body {
    display: flex;
    flex-direction: column;
    flex: 1;
    min-height: 0;
    border: 1px solid #eee;
    border-width: 0 2px 2px 1px;
    border-right-color: #555;
    border-bottom-color: #555;
}
.nav-body h2, .nav-body label {
    height: 10px;
    margin-left: 1px;
}
.nav-body label {
    margin-top: 1px;
}
.nav-body select {
    height: 14px;
    margin: 4px 0 2px 1px;
}
.nav-body select + label {
    margin-top: 1px;
}
.flat {
    height: 14px;
    border: 0;
    border-bottom: 1px solid #999;
    background: linear-gradient(#f0f0f0, #fafafa);
}
.nav-body .hscroll {
    margin: auto 2px 4px;
}
.half {
    left: 10px;
    width: 76px;
}
.most {
    left: 10px;
    width: 118px;
}
.bottom-tabs {
    display: flex;
    height: 14px;
    padding-left: 4px;
    background-color: #f0f0f0;
}
.bottom-tabs button {
    height: 12px;
    padding: 0 3px;
    border: solid #222;
    border-width: 0 1px 1px 0;
    background-color: #f0f0f0;
    line-height: 10px;
}
.bottom-tabs .active {
    height: 16px;
    margin-top: -2px;
    padding: 3px 4px 0;
    background-color: #fff;
}
.gutter {
    width: 19px;
    border-right: 1px solid #ddd;
    background-color: #f7f7f7;
}
.navigator.second {
    width: 184px;
}

/* Schematic editor */
.editor {
    display: flex;
    flex-direction: column;
    flex: 1;
    min-width: 0;
    padding: 6px 3px 1px 5px;
    border: 1px solid #aaa;
    border-left: 0;
    background-color: #f0f0f0;
}
.editor-body {
    display: grid;
    grid-template: 1fr 10px / 1fr 10px;
    flex: 1;
    padding: 0 3px 4px 4px;
    border: solid #555;
    border-width: 2px 2px 2px 1px;
}
.editor-body .hscroll {
    grid-column: 1 / -1;
    padding-right: 14px;
}
.editor-body .vscroll .thumb {
    top: 40%;
    height: 40%;
}
.editor-body .hscroll .thumb {
    left: 31%;
    width: 28%;
}
.sheet {
    border-left: 1px solid #bbb;
    background: linear-gradient(#aaa, #aaa) 0 68% / 100% 1px no-repeat, radial-gradient(circle, #aaa 0 1px, transparent 1px) 0 0 / calc(100% / 61) calc(100% / 62) #fff;
}
.doc-tabs {
    display: flex;
    gap: 3px;
    height: 14px;
    padding-left: 2px;
}
.doc-tabs button {
    display: flex;
    align-items: center;
    gap: 2px;
    height: 12px;
    padding: 0 1px;
    border: solid #333;
    border-width: 0 1px 1px 0;
    background-color: #f0f0f0;
}
.doc-tabs svg {
    width: 8px;
    height: 9px;
}
.doc-tabs .active {
    background-color: #fff;
    height: 14px;
}
.symbols {
    width: 20px;
    padding: 3px 3px 0 4px;
}
.symbols div, .symbols ol {
    display: flex;
    flex-direction: column;
    align-items: center;
    gap: 3px;
    padding: 3px 0 4px;
    border-bottom: 1px solid #ddd;
}
.symbols div:nth-child(5) {
    padding: 6px 0 8px;
}
.symbols svg {
    width: 11px;
    height: 11px;
}
.symbols ol {
    gap: 4px;
    font-size: 10px;
    color: #888;
}
.symbols .current {
    font-weight: bold;
    color: #000;
}
.r90 {
    transform: rotate(90deg);
}
.r180 {
    transform: rotate(180deg);
}
.r270 {
    transform: rotate(270deg);
}

/* Status bar */
.statusbar {
    display: flex;
    height: 11px;
    border-top: 1px solid #ddd;
}
.statusbar span {
    flex: 1;
    padding-left: 2px;
    border-right: 1px solid #ddd;
}
.statusbar .snap {
    flex: none;
    width: 111px;
}
.statusbar .locale {
    flex: none;
    width: 65px;
}
.statusbar .mark {
    flex: none;
    width: 43px;
}
.statusbar .anchor {
    flex: none;
    width: 32px;
}

/* Taskbar */
.taskbar {
    display: flex;
    height: 24px;
    background-color: #06223c;
    color: #fff;
}
.start {
    display: flex;
    justify-content: space-around;
    align-items: center;
    width: 88px;
}
.start svg {
    width: 12px;
    height: 12px;
}
.apps {
    display: grid;
    grid-auto-flow: column;
    grid-auto-columns: 1fr;
    flex: 1;
}
.apps > span {
    display: flex;
    align-items: center;
    justify-content: center;
}
.apps svg {
    width: 15px;
    height: 15px;
}
.apps .open {
    box-shadow: inset 0 -2px #76b9ed;
}
.apps .focused {
    background-color: #1f5f96;
    box-shadow: inset 0 -2px #76b9ed;
}
.apps .opentx {
    position: relative;
    padding-top: 6px;
    font-size: 10px;
    font-weight: bold;
}
.opentx small {
    position: absolute;
    top: 4px;
    font-size: 5px;
    line-height: 6px;
}
.opentx em {
    color: #2ec04a;
    font-style: normal;
}
.max b {
    width: 14px;
    background-color: #d5f0ee;
    color: #0d8f8b;
    font-size: 12px;
    line-height: 14px;
    text-align: center;
}
.tray {
    display: flex;
    align-items: center;
    gap: 4px;
    width: 199px;
    padding: 0 13px 0 14px;
}
.tray svg {
    width: 11px;
    height: 11px;
}
.tray svg:first-child {
    margin-right: 8px;
}
.tray time {
    flex: 1;
    text-align: center;
}
.tray .notice {
    width: 14px;
    height: 14px;
}

/* Trees: every row takes an equal share of the list height */
.tree {
    display: grid;
    grid-auto-rows: 1fr;
    overflow: hidden;
}
.tree li {
    display: flex;
    align-items: center;
    min-height: 0;
    white-space: nowrap;
}
.tree li::before {
    content: "";
    flex: none;
    align-self: stretch;
    background: repeating-linear-gradient(to right, transparent 0 6px, #ddd 6px 7px, transparent 7px 12px);
}
.tree .l1::before {
    width: 12px;
}
.tree .l2::before {
    width: 24px;
}
.tree .l3::before {
    width: 36px;
}
.tree .l4::before {
    width: 48px;
}
.tree .l5::before {
    width: 60px;
}
.tree .l6::before {
    width: 84px;
}
.tree svg {
    width: 12px;
    height: 10px;
}
.tree svg + svg, .tree .leaf svg {
    margin-right: 2px;
}
.tree-pages {
    flex: none;
    height: 227px;
    margin: 7px 0 0 1px;
}
.tree-parts {
    height: 410px;
}
.tree-functions {
    height: 281px;
}
.picked {
    flex: 1;
    background-color: #e0e3e6;
}
.tree-box {
    display: grid;
    grid-template: minmax(0, 1fr) / minmax(0, 1fr) 10px;
    border: 1px solid #828790;
    background-color: #fff;
    overflow: hidden;
}

/* Dialog windows */
.dialog {
    position: absolute;
    display: flex;
    flex-direction: column;
    border: 1px solid #5a94c4;
    background-color: #f0f0f0;
    box-shadow: 0 2px 10px rgba(0, 0, 0, 0.4);
    font-family: Roboto, 'Open Sans', sans-serif;
}
.dialog-title {
    display: flex;
    align-items: center;
    gap: 3px;
    flex: none;
    height: 18px;
    padding: 0 5px 0 4px;
    background-color: #0078d7;
    color: #fff;
}
.close {
    margin-left: auto;
    padding: 0;
    border: 0;
    background: none;
}
.close svg {
    width: 7px;
    height: 7px;
}
.tab-panel {
    display: flex;
    flex-direction: column;
    border: solid #555;
    border-width: 0 2px 2px 0;
}
select {
    appearance: none;
    height: 14px;
    padding: 0 3px;
    border: 1px solid #adadad;
    background-color: #e1e1e1;
}
.dialog input[type="text"] {
    height: 14px;
    padding: 0 3px;
    border: 1px solid #8a8a8a;
    background-color: #fff;
}
.top-tabs button {
    border: 0;
    background: none;
    white-space: nowrap;
}
.actions {
    display: flex;
    justify-content: flex-end;
    gap: 12px;
}
.actions button {
    width: 73px;
    height: 15px;
    padding: 0;
    border: 1px solid #adadad;
    background-color: #e1e1e1;
    line-height: 10px;
}
.caret {
    display: inline-block;
    margin-left: 3px;
    border: solid transparent;
    border-width: 4px 2px 1px;
    border-top-color: #222;
}

/* Parts database */
.parts {
    top: 48px;
    right: 106px;
    bottom: 120px;
    left: 51px;
}
.parts-body {
    display: flex;
    flex: 1;
    min-height: 0;
}
.parts-left {
    display: flex;
    flex-direction: column;
    width: 366px;
    padding: 12px 9px 13px 13px;
    border-right: 2px solid #999;
}
.parts-left .tab-panel {
    flex: 1;
    min-height: 0;
    padding: 12px 7px 8px 12px;
}
.parts-left label {
    height: 12px;
}
.field-row {
    position: relative;
    display: flex;
    margin-bottom: 5px;
}
.field-row select {
    flex: 1;
}
.field-row .arrow {
    position: absolute;
    top: 4px;
    right: 25px;
}
.field-row button {
    display: flex;
    align-items: center;
    justify-content: center;
    width: 15px;
    height: 14px;
    padding: 0;
    border: 1px solid #adadad;
    background-color: #e1e1e1;
}
.field-row svg {
    width: 9px;
    height: 9px;
}
.field-row .more {
    margin-left: 6px;
}
.search-row input {
    flex: 1;
    margin-right: 5px;
}
.parts-left .tree-box {
    flex: 1;
    min-height: 0;
}
.parts-left .vscroll .thumb {
    top: 18px;
    height: 60px;
}
.parts-right {
    display: flex;
    flex-direction: column;
    flex: 1;
    min-width: 0;
    padding: 12px 10px 12px 5px;
}
.parts-right .top-tabs {
    display: flex;
    height: 16px;
    padding: 0 0 0 7px;
}
.parts-right .top-tabs button {
    height: 11px;
    margin-top: 4px;
    padding: 0 3px 0 4px;
    border-right: 1px solid #222;
}
.parts-right .top-tabs .before {
    border-right-color: transparent;
}
.parts-right .top-tabs .active {
    height: 16px;
    margin-top: 0;
    padding-bottom: 1px;
}
.parts-right .tab-panel {
    flex: 1;
    min-height: 0;
    margin-right: 7px;
    padding: 13px 8px 13px 14px;
}
.device-head {
    display: flex;
    align-items: center;
    gap: 1px;
    height: 14px;
    margin-bottom: 3px;
}
.device-head span {
    flex: 1;
    align-self: flex-end;
}
.device-head button {
    width: 15px;
    height: 14px;
    padding: 2px;
    border: 1px solid #ddd;
    background-color: #e6e6e6;
}
.device-head svg {
    width: 9px;
    height: 9px;
}
.device-head .dim {
    background-color: #ccc;
}
.device-head .hot {
    border-color: #0078d7;
    background-color: #e5f1fb;
}
.device-grid {
    flex: 1;
    border-left: 1px solid #666;
    background-color: #fff;
    overflow: hidden;
}
.device-grid table {
    width: 100%;
    border-collapse: collapse;
    table-layout: fixed;
}
.col-num {
    width: 27px;
}
.col-last {
    width: 42px;
}
.device-grid th, .device-grid td {
    height: 11px;
    padding: 0 1px;
    border: 1px solid #888;
    font-weight: normal;
    text-align: left;
    white-space: nowrap;
    overflow: hidden;
}
.device-grid th {
    border-color: #333;
    background-color: #f0f0f0;
}
.device-grid .num {
    background-color: #f0f0f0;
}
.device-grid .cell-active {
    outline: 1px solid #222;
}
.parts-right .actions {
    margin-top: 9px;
}

/* Function definitions */
.functions {
    top: 188px;
    right: 196px;
    bottom: 162px;
    left: 253px;
    padding-bottom: 12px;
}
.functions-body {
    display: flex;
    gap: 12px;
    flex: 1;
    min-height: 0;
    padding: 10px 12px 11px 11px;
}
.picker {
    display: flex;
    flex-direction: column;
    width: 179px;
}
.caption {
    height: 12px;
}
.picker .tree-box {
    flex: 1;
    min-height: 0;
    grid-template-rows: minmax(0, 1fr) 10px;
}
.picker .hscroll {
    grid-column: 1 / -1;
    padding-right: 14px;
}
.picker .vscroll .thumb {
    top: 24px;
    height: 161px;
}
.picker .hscroll .thumb {
    left: 11px;
    width: 92px;
}
.details {
    display: flex;
    flex-direction: column;
    flex: 1;
}
.details .top-tabs {
    display: flex;
    align-items: flex-end;
    height: 18px;
    padding-left: 4px;
}
.details .top-tabs button {
    height: 12px;
    padding: 0 3px;
    border-right: 1px solid #222;
}
.details .top-tabs .active {
    height: 15px;
    padding: 0 5px 2px;
}
.details .tab-panel {
    flex: 1;
    padding: 16px 13px 13px;
}
.attributes {
    display: flex;
    gap: 38px;
    margin-bottom: 12px;
}
.checks {
    width: 90px;
}
.checks label {
    display: flex;
    align-items: center;
    gap: 2px;
    height: 10px;
    margin-bottom: 8px;
    color: #888;
    white-space: nowrap;
}
.checks label:last-child {
    margin-bottom: 0;
}
.checks input {
    appearance: none;
    width: 8px;
    height: 8px;
    border: 1px solid #ccc;
    background-color: #fbfbfb;
}
.checks input:checked::before {
    content: "";
    display: block;
    width: 5px;
    height: 3px;
    border: solid #aaa;
    border-width: 0 0 1px 1px;
    transform: rotate(-45deg);
}
.letter {
    display: flex;
    flex-direction: column;
    gap: 6px;
    width: 129px;
}
.dialog .letter input {
    background-color: #f0f0f0;
}
.details .tab-panel > label {
    height: 12px;
}
textarea {
    display: block;
    height: 55px;
    margin-bottom: 11px;
    padding: 1px 2px;
    border: 1px solid #999;
    background-color: #f0f0f0;
    resize: none;
    overflow: hidden;
}
.properties {
    display: flex;
    flex: 1;
    min-height: 0;
    border-top: 1px solid #777;
}
.properties ul {
    display: grid;
    grid-auto-rows: 1fr;
    flex: 1;
    border-left: 1px solid #777;
}
.properties li {
    display: flex;
    align-items: center;
    min-height: 0;
    padding-left: 1px;
    border: solid #777;
    border-width: 0 1px 1px 0;
}
.properties .current {
    border-color: #111;
    box-shadow: inset 1px 1px #111;
}
.properties .vscroll .thumb {
    top: 10px;
    height: 14px;
}
.functions .actions {
    padding-right: 11px;
}
.actions .default {
    border-color: #0078d7;
    background-color: #cce4f7;
}
.cursor {
    position: absolute;
    right: 104px;
    bottom: 6px;
    width: 9px;
    height: 12px;
}
```
